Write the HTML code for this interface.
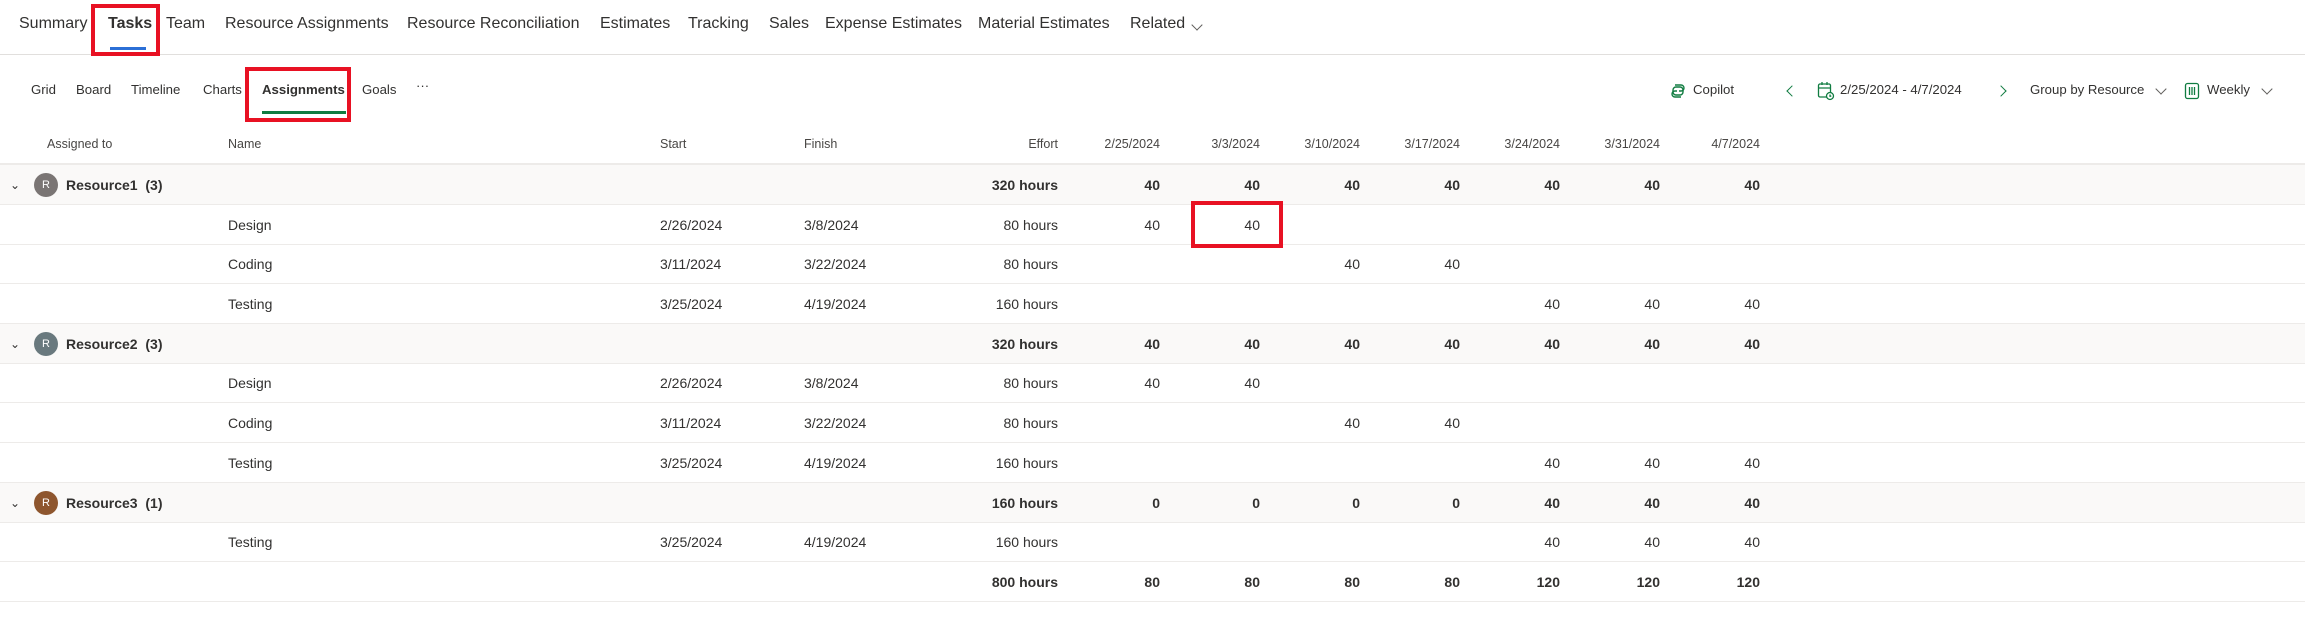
<!DOCTYPE html>
<html><head><meta charset="utf-8"><style>
*{margin:0;padding:0;box-sizing:border-box}
body{width:2305px;height:617px;background:#fff;font-family:"Segoe UI","Liberation Sans",sans-serif;color:#323130;position:relative;overflow:hidden}
.a{position:absolute;white-space:nowrap}
.nav{font-size:16px;top:15px}
.sub{font-size:13.2px;top:82px}
.chev{position:absolute;width:8px;height:8px;border-right:1.3px solid #605e5c;border-bottom:1.3px solid #605e5c;transform:rotate(45deg)}
.row{position:absolute;left:0;width:2305px;height:40px;border-bottom:1px solid #edebe9;font-size:14px;line-height:40px}
.row span{position:absolute;white-space:nowrap}
.g{background:#faf9f8;font-weight:bold}
.hd{font-size:12.5px;color:#484644;top:137px}
.av{display:inline-block;width:24px;height:24px;border-radius:12px;color:#fff;font-size:11px;line-height:24px;text-align:center;font-weight:normal;top:8px}
.box{position:absolute;border:4px solid #e81123}
</style></head><body>
<span class="a nav" style="left:19px">Summary</span>
<span class="a nav" style="left:108px;font-weight:600">Tasks</span>
<div class="a" style="left:110px;top:47px;width:36px;height:3px;background:#2b6fd6"></div>
<span class="a nav" style="left:166px">Team</span>
<span class="a nav" style="left:225px">Resource Assignments</span>
<span class="a nav" style="left:407px">Resource Reconciliation</span>
<span class="a nav" style="left:600px">Estimates</span>
<span class="a nav" style="left:688px">Tracking</span>
<span class="a nav" style="left:769px">Sales</span>
<span class="a nav" style="left:825px">Expense Estimates</span>
<span class="a nav" style="left:978px">Material Estimates</span>
<span class="a nav" style="left:1130px">Related</span>
<div class="chev" style="left:1193px;top:21px"></div>
<div class="a" style="left:0;top:54px;width:2305px;height:1px;background:#e1dfdd"></div>
<div class="box" style="left:91px;top:4px;width:69px;height:52px"></div>

<span class="a sub" style="left:31px">Grid</span>
<span class="a sub" style="left:76px">Board</span>
<span class="a sub" style="left:131px">Timeline</span>
<span class="a sub" style="left:203px">Charts</span>
<span class="a sub" style="left:262px;font-weight:600">Assignments</span>
<div class="a" style="left:262px;top:111px;width:84px;height:3px;background:#107c41"></div>
<span class="a sub" style="left:362px">Goals</span>
<span class="a sub" style="left:416px;top:78px">&middot;&middot;&middot;</span>
<div class="box" style="left:245px;top:67px;width:106px;height:55px"></div>

<svg class="a" style="left:1668px;top:81px" width="20" height="20" viewBox="0 0 20 20" fill="none" stroke="#107c41" stroke-width="1.4"><path d="M7 4h6a3 3 0 0 1 0 6h-2M13 16H7a3 3 0 0 1 0-6h2"/><rect x="5" y="6" width="10" height="8" rx="3"/></svg>
<span class="a sub" style="left:1693px">Copilot</span>
<div class="chev" style="left:1788px;top:87px;transform:rotate(135deg);border-color:#107c41"></div>
<svg class="a" style="left:1817px;top:81px" width="18" height="20" viewBox="0 0 18 20" fill="none" stroke="#107c41" stroke-width="1.3"><rect x="1.5" y="3" width="12" height="13" rx="1.5"/><path d="M1.5 7h12M5 1v3M10 1v3"/><circle cx="13" cy="15" r="3.5" fill="#fff"/><path d="M13 13.5v1.7h1.3"/></svg>
<span class="a sub" style="left:1840px">2/25/2024 - 4/7/2024</span>
<div class="chev" style="left:1997px;top:87px;transform:rotate(-45deg);border-color:#107c41"></div>
<span class="a sub" style="left:2030px">Group by Resource</span>
<div class="chev" style="left:2157px;top:85px"></div>
<svg class="a" style="left:2184px;top:82px" width="16" height="18" viewBox="0 0 16 18" fill="none" stroke="#107c41" stroke-width="1.3"><rect x="1.5" y="1.5" width="13" height="15" rx="2"/><path d="M5.5 5v8M8 5v8M10.5 5v8"/></svg>
<span class="a sub" style="left:2207px">Weekly</span>
<div class="chev" style="left:2263px;top:85px"></div>

<span class="a hd" style="left:47px">Assigned to</span>
<span class="a hd" style="left:228px">Name</span>
<span class="a hd" style="left:660px">Start</span>
<span class="a hd" style="left:804px">Finish</span>
<span class="a hd" style="right:1247px">Effort</span>
<span class="a hd" style="right:1145px">2/25/2024</span>
<span class="a hd" style="right:1045px">3/3/2024</span>
<span class="a hd" style="right:945px">3/10/2024</span>
<span class="a hd" style="right:845px">3/17/2024</span>
<span class="a hd" style="right:745px">3/24/2024</span>
<span class="a hd" style="right:645px">3/31/2024</span>
<span class="a hd" style="right:545px">4/7/2024</span>
<div class="a" style="left:0;top:163px;width:2305px;height:2px;background:#edebe9"></div>

<div class="row g" style="top:165px"><span style="left:10px;font-weight:normal;font-size:12px">&#8964;</span><span class="av" style="left:34px;background:#7a7574">R</span><span style="left:66px">Resource1&nbsp; (3)</span><span style="right:1247px">320 hours</span><span style="right:1145px">40</span><span style="right:1045px">40</span><span style="right:945px">40</span><span style="right:845px">40</span><span style="right:745px">40</span><span style="right:645px">40</span><span style="right:545px">40</span></div>
<div class="row" style="top:205px"><span style="left:228px">Design</span><span style="left:660px">2/26/2024</span><span style="left:804px">3/8/2024</span><span style="right:1247px">80 hours</span><span style="right:1145px">40</span><span style="right:1045px">40</span></div>
<div class="row" style="top:244px"><span style="left:228px">Coding</span><span style="left:660px">3/11/2024</span><span style="left:804px">3/22/2024</span><span style="right:1247px">80 hours</span><span style="right:945px">40</span><span style="right:845px">40</span></div>
<div class="row" style="top:284px"><span style="left:228px">Testing</span><span style="left:660px">3/25/2024</span><span style="left:804px">4/19/2024</span><span style="right:1247px">160 hours</span><span style="right:745px">40</span><span style="right:645px">40</span><span style="right:545px">40</span></div>
<div class="row g" style="top:324px"><span style="left:10px;font-weight:normal;font-size:12px">&#8964;</span><span class="av" style="left:34px;background:#69797e">R</span><span style="left:66px">Resource2&nbsp; (3)</span><span style="right:1247px">320 hours</span><span style="right:1145px">40</span><span style="right:1045px">40</span><span style="right:945px">40</span><span style="right:845px">40</span><span style="right:745px">40</span><span style="right:645px">40</span><span style="right:545px">40</span></div>
<div class="row" style="top:363px"><span style="left:228px">Design</span><span style="left:660px">2/26/2024</span><span style="left:804px">3/8/2024</span><span style="right:1247px">80 hours</span><span style="right:1145px">40</span><span style="right:1045px">40</span></div>
<div class="row" style="top:403px"><span style="left:228px">Coding</span><span style="left:660px">3/11/2024</span><span style="left:804px">3/22/2024</span><span style="right:1247px">80 hours</span><span style="right:945px">40</span><span style="right:845px">40</span></div>
<div class="row" style="top:443px"><span style="left:228px">Testing</span><span style="left:660px">3/25/2024</span><span style="left:804px">4/19/2024</span><span style="right:1247px">160 hours</span><span style="right:745px">40</span><span style="right:645px">40</span><span style="right:545px">40</span></div>
<div class="row g" style="top:483px"><span style="left:10px;font-weight:normal;font-size:12px">&#8964;</span><span class="av" style="left:34px;background:#8e562e">R</span><span style="left:66px">Resource3&nbsp; (1)</span><span style="right:1247px">160 hours</span><span style="right:1145px">0</span><span style="right:1045px">0</span><span style="right:945px">0</span><span style="right:845px">0</span><span style="right:745px">40</span><span style="right:645px">40</span><span style="right:545px">40</span></div>
<div class="row" style="top:522px"><span style="left:228px">Testing</span><span style="left:660px">3/25/2024</span><span style="left:804px">4/19/2024</span><span style="right:1247px">160 hours</span><span style="right:745px">40</span><span style="right:645px">40</span><span style="right:545px">40</span></div>
<div class="row" style="top:562px;font-weight:bold"><span style="right:1247px">800 hours</span><span style="right:1145px">80</span><span style="right:1045px">80</span><span style="right:945px">80</span><span style="right:845px">80</span><span style="right:745px">120</span><span style="right:645px">120</span><span style="right:545px">120</span></div>

<div class="box" style="left:1191px;top:201px;width:92px;height:47px"></div>
</body></html>
